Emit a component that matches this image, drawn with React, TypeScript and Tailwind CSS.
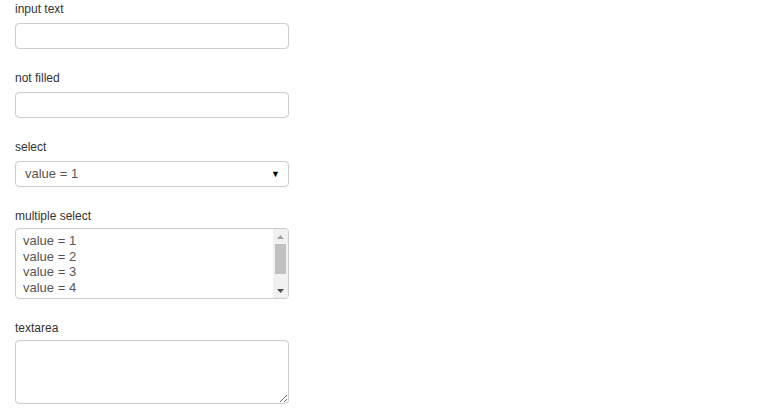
const options = ['value = 1', 'value = 2', 'value = 3', 'value = 4', 'value = 5'];

const Label = ({ children }: { children: React.ReactNode }) => (
  <div className="h-[18px] leading-[18px] mb-[5px] text-[12px] text-[#333]">{children}</div>
);

export default function App() {
  return (
    <div className="min-h-[411px] bg-white pl-[15px] font-['Liberation_Sans',Arial,sans-serif]">
      <div className="w-[274px] flex flex-col gap-[20px]">
        {/* input text */}
        <div>
          <Label>input text</Label>
          <input
            type="text"
            className="block w-full h-[26px] border border-[#ccc] rounded-[4px] px-2 text-[13px] outline-none"
          />
        </div>

        {/* not filled */}
        <div>
          <Label>not filled</Label>
          <input
            type="text"
            className="block w-full h-[26px] border border-[#ccc] rounded-[4px] px-2 text-[13px] outline-none"
          />
        </div>

        {/* select */}
        <div>
          <Label>select</Label>
          <div className="relative h-[26px] border border-[#ccc] rounded-[4px] flex items-center pl-[9px] pr-[8px] text-[13px] text-[#555]">
            <span className="flex-1">value = 1</span>
            <span className="text-[9px] text-black leading-none">▼</span>
          </div>
        </div>

        {/* multiple select */}
        <div>
          <Label>multiple select</Label>
          <div className="h-[71px] border border-[#ccc] rounded-[4px] flex overflow-hidden -mt-[2px]">
            <div className="flex-1 pl-[7px] pt-[4px] text-[13px] leading-[15.5px] text-[#555]">
              {options.slice(0, 4).map((o) => (
                <div key={o}>{o}</div>
              ))}
            </div>
            <div className="w-[15px] bg-[#f1f1f1] flex flex-col items-center">
              <div className="h-[15px] flex items-center justify-center">
                <svg width="7" height="4" viewBox="0 0 7 4"><path d="M0 4 L3.5 0 L7 4 Z" fill="#a3a3a3" /></svg>
              </div>
              <div className="w-[11px] h-[30px] bg-[#c1c1c1]" />
              <div className="flex-1" />
              <div className="h-[15px] flex items-center justify-center">
                <svg width="7" height="4" viewBox="0 0 7 4"><path d="M0 0 L7 0 L3.5 4 Z" fill="#505050" /></svg>
              </div>
            </div>
          </div>
        </div>

        {/* textarea */}
        <div>
          <Label>textarea</Label>
          <textarea className="block w-full h-[64px] -mt-[2px] border border-[#ccc] rounded-[4px] px-2 py-1 text-[13px] outline-none" />
        </div>
      </div>
    </div>
  );
}
